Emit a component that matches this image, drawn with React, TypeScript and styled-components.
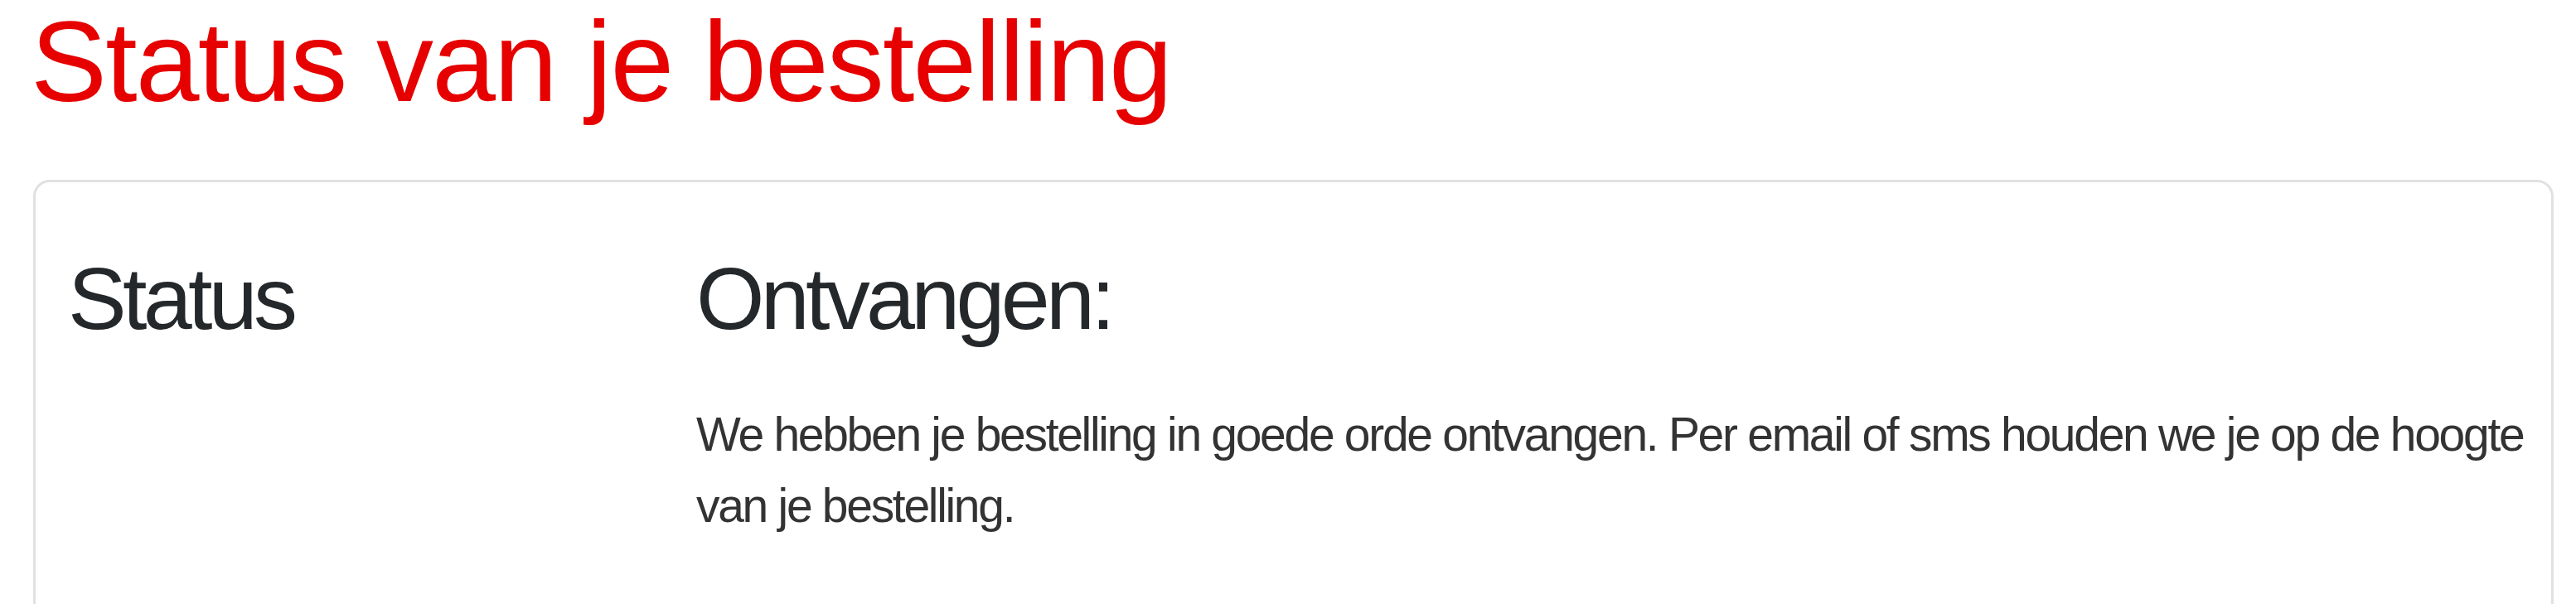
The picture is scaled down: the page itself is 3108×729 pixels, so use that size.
import React from 'react';
import styled, { createGlobalStyle } from 'styled-components';

const GlobalStyle = createGlobalStyle`
    html, body {
        margin: 0;
        padding: 0;
        background: #fff;
    }
    body {
        font-family: "Liberation Sans", Arial, sans-serif;
        color: #333;
    }
`;

const Page = styled.main`
    padding: 0 27px 0 40px;
`;

const PageTitle = styled.h1`
    margin: 0 0 69px -3px;
    font-size: 138px;
    line-height: 148px;
    font-weight: 400;
    letter-spacing: -1.8px;
    color: #e60000;
`;

const Card = styled.section`
    display: grid;
    grid-template-columns: 758px 1fr;
    padding: 77px 10px 120px 39px;
    border: 3px solid #e1e1e1;
    border-radius: 20px;
    background: #fff;
`;

const Label = styled.h2`
    margin: 0;
    font-size: 106px;
    line-height: 127px;
    font-weight: 400;
    letter-spacing: -4.7px;
    color: #25282b;
`;

const StatusBody = styled.div`
    display: flex;
    flex-direction: column;
    gap: 57px;
`;

const StatusTitle = styled(Label).attrs({ as: 'h3' })``;

const StatusText = styled.p`
    margin: 0;
    font-size: 57px;
    line-height: 86px;
    letter-spacing: -2.3px;
    color: #333;
`;

const App: React.FC = () => {
    return (
        <>
            <GlobalStyle />
            <Page>
                <PageTitle>Status van je bestelling</PageTitle>
                <Card>
                    <Label>Status</Label>
                    <StatusBody>
                        <StatusTitle>Ontvangen:</StatusTitle>
                        <StatusText>
                            We hebben je bestelling in goede orde ontvangen. Per email of sms houden we je op de hoogte van je bestelling.
                        </StatusText>
                    </StatusBody>
                </Card>
            </Page>
        </>
    );
};

export default App;
